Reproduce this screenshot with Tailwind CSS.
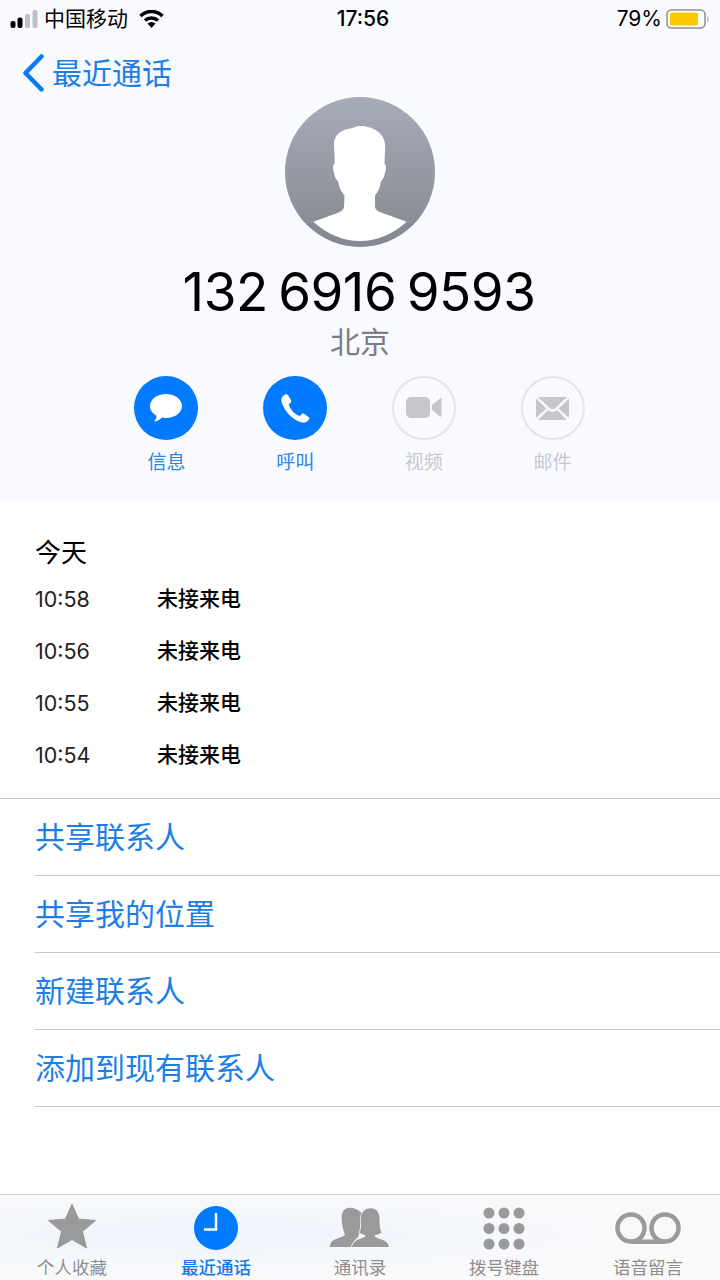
<!DOCTYPE html>
<html lang='en'>
<head>
  <meta charset='UTF-8'>
  <meta name='viewport' content='width=device-width, initial-scale=1.0'>
  <title>最近通话</title>
  <script src="https://cdn.jsdelivr.net/npm/@tailwindcss/browser@4"></script>
</head>
<body class='bg-white'>
<main class='w-[720px] h-[1280px] flex flex-col overflow-hidden bg-white text-black font-["Inter","Noto_Sans_CJK_SC",sans-serif]'>

  <!-- header -->
  <header class='h-[500px] shrink-0 bg-[#f8faff] flex flex-col'>
    <div class='h-[37px] flex items-center justify-between pl-[10px] pr-[10px] text-[21px] leading-none'>
      <div class='w-[240px] flex items-center'>
        <svg width='29' height='18' viewBox='0 0 29 18' class='mr-[5px]'>
          <rect x='0.5' y='11' width='5' height='7' rx='2' fill='#000'/>
          <rect x='7.5' y='7.5' width='5' height='10.500' rx='2' fill='#000'/>
          <rect x='15' y='4' width='5' height='14' rx='2' fill='#c0c0c5'/>
          <rect x='22.500' y='0' width='5' height='18' rx='2' fill='#c0c0c5'/>
        </svg>
        <span>中国移动</span>
        <svg width='25' height='18' viewBox='0 0 25 18' class='ml-[11px]'>
          <path d='M1.500 6 A15.500 15.500 0 0 1 23.500 6' fill='none' stroke='#000' stroke-width='3.500'/>
          <path d='M6 10.500 A9.500 9.500 0 0 1 19 10.500' fill='none' stroke='#000' stroke-width='3.500'/>
          <path d='M12.500 18 L8.500 13.500 A6 6 0 0 1 16.500 13.500 Z' fill='#000'/>
        </svg>
      </div>
      <span class='ml-[6px] font-medium'>17:56</span>
      <div class='w-[240px] flex items-center justify-end'>
        <span>79%</span>
        <svg width='44' height='20' viewBox='0 0 44 20' class='ml-[4px]'>
          <rect x='1' y='1' width='38' height='18' rx='4.500' fill='#fff' stroke='#8e8e93' stroke-width='1.500'/>
          <rect x='4' y='3.500' width='28' height='13' rx='1.500' fill='#fdc800'/>
          <path d='M41.500 6.500 Q43.500 10 41.500 13.500 Z' fill='#8e8e93'/>
        </svg>
      </div>
    </div>

    <div class='h-[60px] pt-[12px] flex items-center pl-[22px] text-[30px] leading-none text-[#1d7fe6]'>
      <svg width='23' height='38' viewBox='0 0 23 38' class='mr-[7px]'>
        <path d='M19.500 2.500 L3.500 19 L19.500 35.500' fill='none' stroke='#0a7af5' stroke-width='4.500' stroke-linecap='round' stroke-linejoin='round'/>
      </svg>
      <span>最近通话</span>
    </div>

    <svg width='150' height='150' viewBox='0 0 150 150' class='mx-auto'>
      <defs>
        <linearGradient id='avatarFill' x1='0' y1='0' x2='0' y2='1'>
          <stop offset='0' stop-color='#a7acb9'/>
          <stop offset='1' stop-color='#84878f'/>
        </linearGradient>
      </defs>
      <circle cx='75' cy='75' r='75' fill='url(#avatarFill)'/>
      <path d='M74.500 29 C71 29 69 31 65 31.500 C56 33 49 38 49 47 C49 54 50 60 49.500 67 C48 67.500 47.500 70 48.500 74 C49.500 79 51 83 53 84 C54 90 56 95 59.500 98.500 L59 110 C58.500 113 56 114.500 53 115.700 L28.300 124.700 C42 137 58 144 75 144 C92 144 108 137 121.700 124.700 L97 115.700 C93 114.500 90.500 113 90 110 L90 98.500 C93 95 95.500 90 96 84 C98 83 99.500 79 100.500 74 C101.500 70 101 67.500 99.500 67 C99.500 60 100.500 54 100 47 C99 36 88 29 74.500 29 Z' fill='#fff'/>
    </svg>

    <h1 class='mt-[15px] pr-[2px] text-center text-[53px] leading-[60px] tracking-[-0.5px] [word-spacing:-4px]'>132 6916 9593</h1>
    <p class='mt-[2px] text-center text-[30px] leading-[36px] text-[#7d7d82]'>北京</p>

    <div class='mt-[16px] pr-[1px] flex justify-center gap-[64.7px]'>
      <div class='w-[64px] flex flex-col items-center'>
        <div class='w-[64px] h-[64px] rounded-full bg-[#007aff] flex items-center justify-center'>
          <svg width='34' height='30' viewBox='0 0 34 30'>
            <path d='M17 1 C26 1 33 6.500 33 13 C33 19.500 26 25 17 25 C15.500 25 14 24.800 13 24.600 C11 27 8 28.500 5 28.500 C6.500 27 7.500 25 7.500 22.700 C3.500 20.500 1 17 1 13 C1 6.500 8 1 17 1 Z' fill='#fff'/>
          </svg>
        </div>
        <span class='mt-[11px] text-[19px] leading-[24px] whitespace-nowrap text-[#2a85e6]'>信息</span>
      </div>
      <div class='w-[64px] flex flex-col items-center'>
        <div class='w-[64px] h-[64px] rounded-full bg-[#007aff] flex items-center justify-center'>
          <svg width='30' height='30' viewBox='0 0 30 30'>
            <path d='M5 1.500 C6 1 7 1 8 2 L11 7 C11.500 8.500 11 9.500 10 10.300 L8.700 11.500 C9.500 14 11 16.500 13 18.800 C15 20.800 17.500 22.500 19.800 23 L21.300 21.500 C22.300 20.500 23.500 20.300 24.500 21 L28.500 24 C29.500 25 29.500 26 28.700 27 C27 29 24.500 30 22 29.500 C16 28 10.500 24 6.500 18.500 C3 13.500 1 9 1.500 5.500 C2 3.800 3.300 2.500 5 1.500 Z' fill='#fff'/>
          </svg>
        </div>
        <span class='mt-[11px] text-[19px] leading-[24px] whitespace-nowrap text-[#2a85e6]'>呼叫</span>
      </div>
      <div class='w-[64px] flex flex-col items-center'>
        <div class='w-[64px] h-[64px] rounded-full border-2 border-[#e4e4e9] flex items-center justify-center'>
          <svg width='36' height='22' viewBox='0 0 36 22'>
            <rect x='0' y='0' width='24' height='21' rx='5' fill='#c6c6cb'/>
            <path d='M26 8 L34 1.500 C35 1 35.500 1.500 35.500 2.500 L35.500 18.500 C35.500 19.500 35 20 34 19.500 L26 13 Z' fill='#c6c6cb'/>
          </svg>
        </div>
        <span class='mt-[11px] text-[19px] leading-[24px] whitespace-nowrap text-[#c8c8cd]'>视频</span>
      </div>
      <div class='w-[64px] flex flex-col items-center'>
        <div class='w-[64px] h-[64px] rounded-full border-2 border-[#e4e4e9] flex items-center justify-center'>
          <svg width='33' height='23' viewBox='0 0 33 23'>
            <path d='M2 0 L31 0 L19.500 11 C17.500 12.800 15.500 12.800 13.500 11 Z' fill='#c6c6cb'/>
            <path d='M0 1.500 L10.500 11.500 L0 21 Z M33 1.500 L22.500 11.500 L33 21 Z' fill='#c6c6cb'/>
            <path d='M2 23 L12 13 C15 15.500 18 15.500 21 13 L31 23 Z' fill='#c6c6cb'/>
          </svg>
        </div>
        <span class='mt-[11px] text-[19px] leading-[24px] whitespace-nowrap text-[#c8c8cd]'>邮件</span>
      </div>
    </div>
  </header>

  <!-- calls -->
  <section class='h-[299px] shrink-0 pl-[35px] pt-[35px] border-b border-[#c8c8cc]'>
    <h2 class='text-[26px] leading-[36px]'>今天</h2>
    <ul class='mt-[2px] text-[21.500px]'>
      <li class='h-[52px] flex items-center'><span class='w-[122px] text-[#222]'>10:58</span><span class='text-[21px] font-medium'>未接来电</span></li>
      <li class='h-[52px] flex items-center'><span class='w-[122px] text-[#222]'>10:56</span><span class='text-[21px] font-medium'>未接来电</span></li>
      <li class='h-[52px] flex items-center'><span class='w-[122px] text-[#222]'>10:55</span><span class='text-[21px] font-medium'>未接来电</span></li>
      <li class='h-[52px] flex items-center'><span class='w-[122px] text-[#222]'>10:54</span><span class='text-[21px] font-medium'>未接来电</span></li>
    </ul>
  </section>

  <!-- actions -->
  <nav class='pl-[35px] text-[30px] text-[#1d7fe6]'>
    <div class='h-[77px] pt-[1px] flex items-center border-b border-[#c8c8cc]'>共享联系人</div>
    <div class='h-[77px] pt-[1px] flex items-center border-b border-[#c8c8cc]'>共享我的位置</div>
    <div class='h-[77px] pt-[1px] flex items-center border-b border-[#c8c8cc]'>新建联系人</div>
    <div class='h-[77px] pt-[1px] flex items-center border-b border-[#c8c8cc]'>添加到现有联系人</div>
  </nav>

  <!-- tab bar -->
  <footer class='mt-auto h-[86px] shrink-0 border-t border-[#d2d2d6] bg-[radial-gradient(ellipse_at_216px_40px,#eef4fd_0%,#f6f8fb_45%,#f9f9f9_70%)] flex'>
    <div class='w-[144px] flex flex-col items-center'>
      <div class='h-[61px] pt-[8px]'>
        <svg width='50' height='46' viewBox='0 0 50 46' class='block'>
          <path d='M25 1 L31.500 16 L48.500 17.500 L35.500 28.500 L39.500 45 L25 36.500 L10.500 45 L14.500 28.500 L1.500 17.500 L18.500 16 Z' fill='#9a9a9a' stroke='#9a9a9a' stroke-width='1' stroke-linejoin='round'/>
        </svg>
      </div>
      <span class='text-[17.5px] leading-[24px] whitespace-nowrap text-[#8e8e8e]'>个人收藏</span>
    </div>
    <div class='w-[144px] flex flex-col items-center'>
      <div class='h-[61px] pt-[11px]'>
        <svg width='44' height='44' viewBox='0 0 44 44' class='block'>
          <circle cx='22' cy='22' r='22' fill='#007aff'/>
          <path d='M22 7 L22 23.500 L10 23.500' fill='none' stroke='#fff' stroke-width='2.500'/>
        </svg>
      </div>
      <span class='text-[17.5px] leading-[24px] whitespace-nowrap font-medium text-[#0f7af0]'>最近通话</span>
    </div>
    <div class='w-[144px] flex flex-col items-center'>
      <div class='h-[61px] pt-[12px]'>
        <svg width='60' height='41' viewBox='0 0 60 41' class='block'>
          <path d='M20 0.700 C14 0.700 11.500 5 11.700 11.300 C11.800 16 12.500 20 13.300 23 L15 28 C12 31 4 31.500 1.500 35 C0.500 36.500 0 38 0 40 L21 40 C22 36 25 33 28 30 L34 12 C34 6 27 0.700 20 0.700 Z' fill='#9a9a9a'/>
          <path d='M40.700 1.300 C34 1.300 31 6 31 11.300 C31 17 31.500 22 29.500 25.500 C31 27 33 27.500 35 28 L35 29.500 C32 32 27 32 24.500 35 C23 36.500 22 38 21.700 40 L59 40 C58.500 37 57 35 54 33.500 C51 32 47 31.500 45 29.500 L45 28 C47 28 49.500 27 51.500 25.500 C49.500 22 49.500 17 49.500 11.300 C49.500 6 47 1.300 40.700 1.300 Z' fill='#9a9a9a' stroke='#f8f8f9' stroke-width='1.500' paint-order='stroke'/>
        </svg>
      </div>
      <span class='text-[17.5px] leading-[24px] whitespace-nowrap text-[#8e8e8e]'>通讯录</span>
    </div>
    <div class='w-[144px] flex flex-col items-center'>
      <div class='h-[61px] pt-[12px]'>
        <svg width='42' height='43' viewBox='0 0 42 43' class='block'>
          <g fill='#9a9a9a'>
            <circle cx='6' cy='6' r='5.500'/><circle cx='21' cy='6' r='5.500'/><circle cx='36' cy='6' r='5.500'/>
            <circle cx='6' cy='21.500' r='5.500'/><circle cx='21' cy='21.500' r='5.500'/><circle cx='36' cy='21.500' r='5.500'/>
            <circle cx='6' cy='37' r='5.500'/><circle cx='21' cy='37' r='5.500'/><circle cx='36' cy='37' r='5.500'/>
          </g>
        </svg>
      </div>
      <span class='text-[17.5px] leading-[24px] whitespace-nowrap text-[#8e8e8e]'>拨号键盘</span>
    </div>
    <div class='w-[144px] flex flex-col items-center'>
      <div class='h-[61px] pt-[17px]'>
        <svg width='66' height='32' viewBox='0 0 66 32' class='block'>
          <circle cx='16' cy='16' r='13.500' fill='none' stroke='#9a9a9a' stroke-width='4.500'/>
          <circle cx='50' cy='16' r='13.500' fill='none' stroke='#9a9a9a' stroke-width='4.500'/>
          <path d='M16 29.700 L50 29.700' stroke='#9a9a9a' stroke-width='4.500'/>
        </svg>
      </div>
      <span class='text-[17.5px] leading-[24px] whitespace-nowrap text-[#8e8e8e]'>语音留言</span>
    </div>
  </footer>
</main>
</body>
</html>
